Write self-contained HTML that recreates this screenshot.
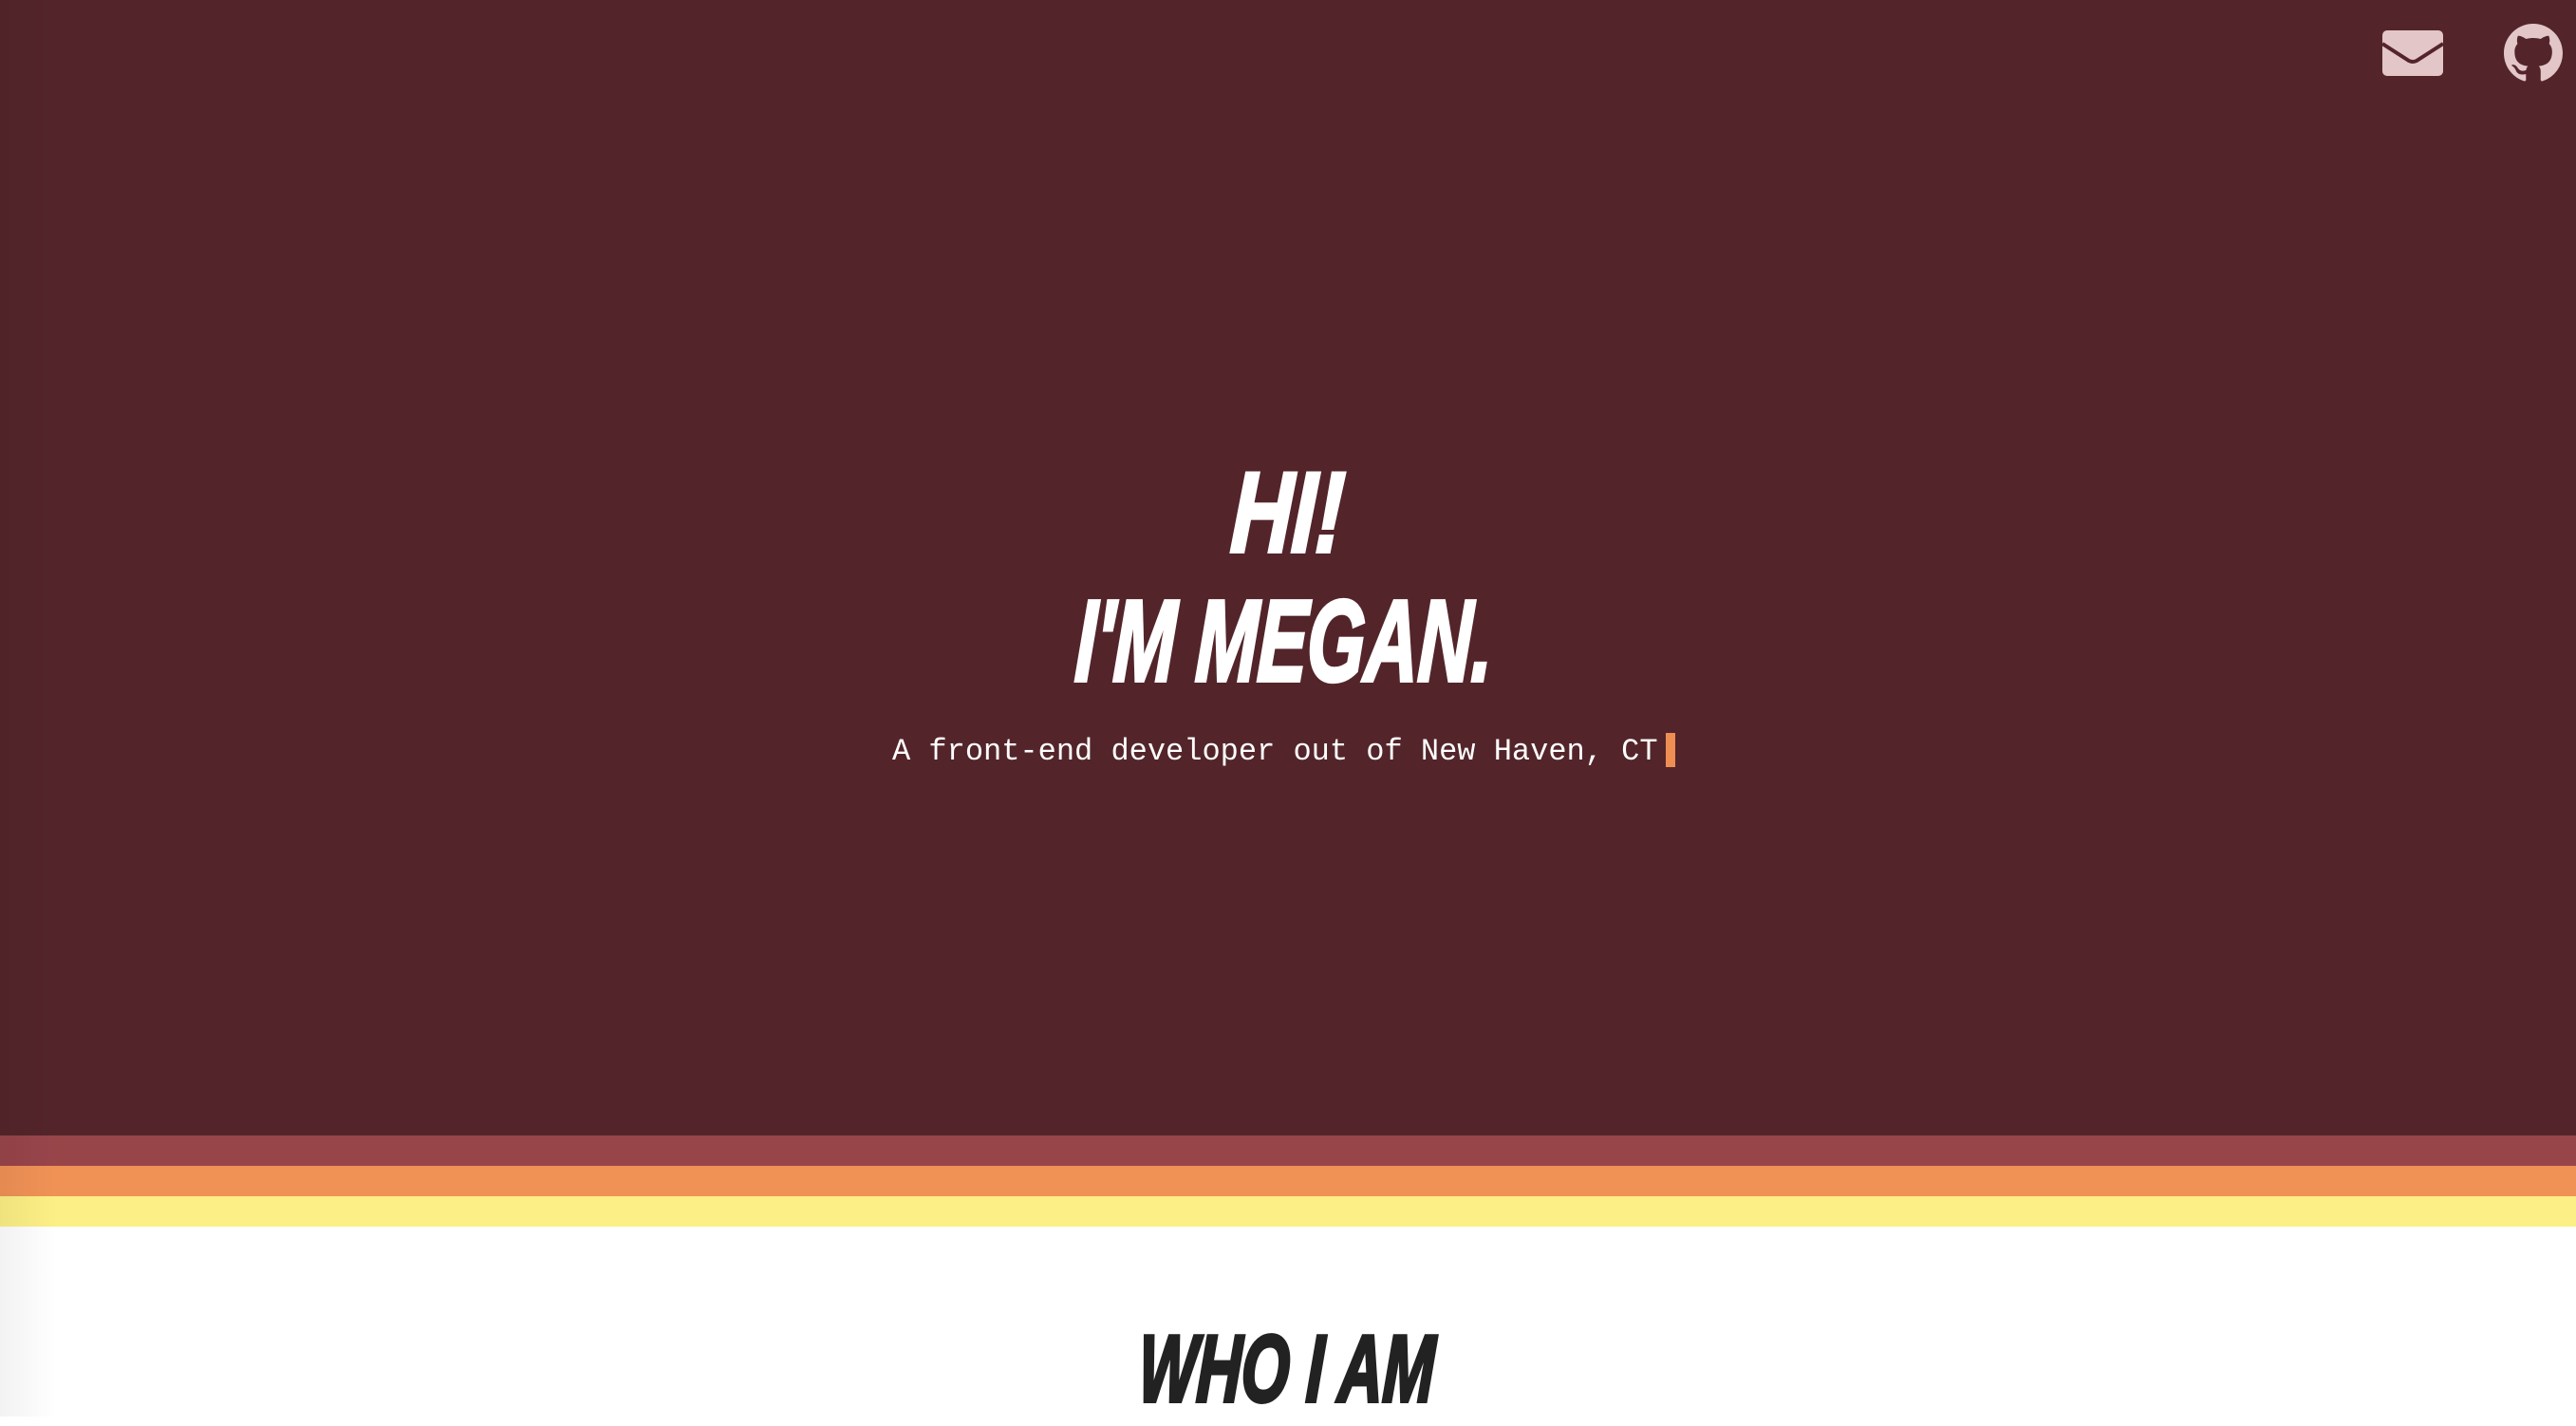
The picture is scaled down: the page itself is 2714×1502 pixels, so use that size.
<!DOCTYPE html>
<html><head><meta charset="utf-8"><style>
html,body{margin:0;padding:0;width:2714px;height:1492px;overflow:hidden;background:#fff}
.hero{position:absolute;left:0;top:0;width:2714px;height:1196px;background:#53252a}
.shade{position:absolute;left:0;top:0;width:60px;height:1492px;background:linear-gradient(to right,rgba(0,0,0,.05),rgba(0,0,0,0));pointer-events:none}
.s{position:absolute;left:0;width:2714px;height:32px}
.t{position:absolute;left:0;width:2714px;text-align:center;font-family:"Liberation Sans",sans-serif;font-weight:bold;font-style:italic;white-space:nowrap}
.t span{display:inline-block;transform-origin:center;-webkit-text-stroke:4px currentColor}
.sub{position:absolute;left:940px;top:768px;font-family:"Liberation Mono","DejaVu Sans Mono",monospace;font-size:32px;color:#fff;white-space:nowrap;line-height:48px}
.cur{position:absolute;left:1755px;top:772px;width:10px;height:36px;background:#ee8e52}
</style></head><body>
<div class="hero"></div>
<div class="s" style="top:1196px;background:#98454a"></div>
<div class="s" style="top:1228px;background:#f09256"></div>
<div class="s" style="top:1260px;background:#fcef85"></div>
<div class="shade"></div>

<svg style="position:absolute;left:2510px;top:32px" width="64" height="48" viewBox="0 0 64 48">
<rect x="0" y="0" width="64" height="48" rx="5" fill="#e2c6c8"/>
<path d="M0 14 L28 32 Q32 34 36 32 L64 14" fill="none" stroke="#53252a" stroke-width="4"/>
</svg>
<svg style="position:absolute;left:2638px;top:25px" width="62" height="62" viewBox="0 0 16 16">
<path fill="#e2c6c8" d="M8 0C3.58 0 0 3.58 0 8c0 3.54 2.29 6.53 5.47 7.59.4.07.55-.17.55-.38 0-.19-.01-.82-.01-1.49-2.01.37-2.53-.49-2.69-.94-.09-.23-.48-.94-.82-1.13-.28-.15-.68-.52-.01-.53.63-.01 1.08.58 1.23.82.72 1.21 1.87.87 2.33.66.07-.52.28-.87.51-1.07-1.78-.2-3.64-.89-3.64-3.95 0-.87.31-1.59.82-2.15-.08-.2-.36-1.02.08-2.12 0 0 .67-.21 2.2.82.64-.18 1.32-.27 2-.27.68 0 1.36.09 2 .27 1.53-1.04 2.2-.82 2.2-.82.44 1.1.16 1.92.08 2.12.51.56.82 1.27.82 2.15 0 3.07-1.87 3.75-3.65 3.95.29.25.54.73.54 1.48 0 1.07-.01 1.93-.01 2.2 0 .21.15.46.55.38A8.013 8.013 0 0016 8c0-4.42-3.58-8-8-8z"/>
</svg>

<div class="t" style="top:470px;font-size:120px;line-height:140px;color:#fff"><span style="transform:scaleX(.74) skewX(-4deg)">HI!</span></div>
<div class="t" style="top:605px;font-size:122px;line-height:140px;color:#fff"><span style="transform:scaleX(.64) skewX(-4deg);margin-left:-8px">I'M MEGAN.</span></div>
<div class="sub">A front-end developer out of New Haven, CT</div>
<div class="cur"></div>

<div class="t" style="top:1382px;font-size:100px;line-height:120px;color:#222"><span style="transform:scaleX(.65) skewX(-4deg);margin-left:-2px">WHO I AM</span></div>
</body></html>
